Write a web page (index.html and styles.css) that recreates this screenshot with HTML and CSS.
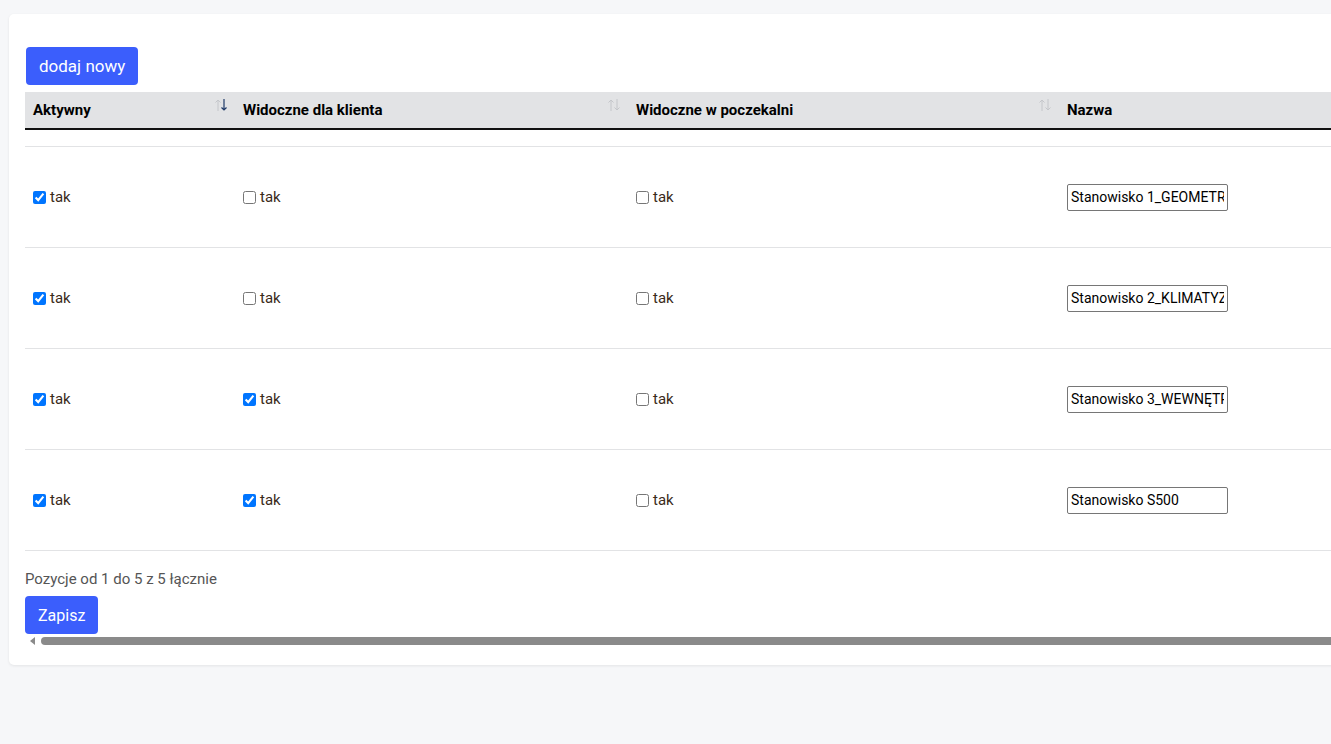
FILE: index.html
```html
<!DOCTYPE html>
<html lang="pl">
<head>
    <meta charset="UTF-8">
    <meta name="viewport" content="width=device-width, initial-scale=1.0">
    <link rel="stylesheet" href="styles.css">
    <title>Stanowiska</title>
</head>
<body>
    <div class="card">
        <button class="btn btn-add">dodaj nowy</button>
        <table class="grid">
            <thead>
                <tr>
                    <th class="col-active">Aktywny
                        <svg class="sort" width="14" height="14" viewBox="0 0 14 14">
                            <path d="M4 13V2M1.5 4.5L4 2l2.5 2.5" stroke="#c4c6ca" fill="none" stroke-width="1"/>
                            <path d="M10 1v11M7.5 9.5L10 12l2.5-2.5" stroke="#1f3a68" fill="none" stroke-width="1.2"/>
                        </svg>
                    </th>
                    <th class="col-client">Widoczne dla klienta
                        <svg class="sort" width="14" height="14" viewBox="0 0 14 14">
                            <path d="M4 13V2M1.5 4.5L4 2l2.5 2.5" stroke="#c4c6ca" fill="none" stroke-width="1"/>
                            <path d="M10 1v11M7.5 9.5L10 12l2.5-2.5" stroke="#c4c6ca" fill="none" stroke-width="1"/>
                        </svg>
                    </th>
                    <th class="col-lobby">Widoczne w poczekalni
                        <svg class="sort" width="14" height="14" viewBox="0 0 14 14">
                            <path d="M4 13V2M1.5 4.5L4 2l2.5 2.5" stroke="#c4c6ca" fill="none" stroke-width="1"/>
                            <path d="M10 1v11M7.5 9.5L10 12l2.5-2.5" stroke="#c4c6ca" fill="none" stroke-width="1"/>
                        </svg>
                    </th>
                    <th class="col-name">Nazwa</th>
                </tr>
            </thead>
            <tbody>
                <tr class="spacer"><td></td><td></td><td></td><td></td></tr>
                <tr>
                    <td><label><input type="checkbox" checked> tak</label></td>
                    <td><label><input type="checkbox"> tak</label></td>
                    <td><label><input type="checkbox"> tak</label></td>
                    <td><input class="name" type="text" value="Stanowisko 1_GEOMETRIA"></td>
                </tr>
                <tr>
                    <td><label><input type="checkbox" checked> tak</label></td>
                    <td><label><input type="checkbox"> tak</label></td>
                    <td><label><input type="checkbox"> tak</label></td>
                    <td><input class="name" type="text" value="Stanowisko 2_KLIMATYZACJA"></td>
                </tr>
                <tr>
                    <td><label><input type="checkbox" checked> tak</label></td>
                    <td><label><input type="checkbox" checked> tak</label></td>
                    <td><label><input type="checkbox"> tak</label></td>
                    <td><input class="name" type="text" value="Stanowisko 3_WEWNĘTRZNE"></td>
                </tr>
                <tr>
                    <td><label><input type="checkbox" checked> tak</label></td>
                    <td><label><input type="checkbox" checked> tak</label></td>
                    <td><label><input type="checkbox"> tak</label></td>
                    <td><input class="name" type="text" value="Stanowisko S500"></td>
                </tr>
            </tbody>
        </table>
        <div class="info">Pozycje od 1 do 5 z 5 łącznie</div>
        <button class="btn">Zapisz</button>
        <div class="hscroll">
            <span class="arrow"></span>
            <span class="thumb"></span>
        </div>
    </div>
</body>
</html>
```

FILE: styles.css
```css
body {
    margin: 0;
    padding: 14px 0 0 9px;
    background-color: #f6f7f9;
    font-family: Roboto, "Liberation Sans", Arial, sans-serif;
    font-size: 15px;
    color: #222;
    overflow: hidden;
    height: 100vh;
    box-sizing: border-box;
}

.card {
    width: 1600px;
    background-color: white;
    border-radius: 5px;
    box-shadow: 0 1px 3px rgba(0, 0, 0, 0.08);
    padding: 33px 16px 18px 16px;
    box-sizing: border-box;
}

.btn {
    display: block;
    background-color: #3b5efc;
    color: white;
    border: none;
    border-radius: 4px;
    font-family: inherit;
    font-size: 16px;
    height: 38px;
    padding: 0 13px;
    cursor: pointer;
}

.btn-add {
    font-size: 17px;
    margin-left: 1px;
}

.grid {
    margin-top: 7px;
    border-collapse: collapse;
    table-layout: fixed;
    width: 1550px;
}

.grid th {
    background-color: #e2e3e5;
    height: 36px;
    text-align: left;
    font-weight: bold;
    font-size: 15px;
    color: #000;
    padding: 0 8px;
    border-bottom: 2px solid #111;
    position: relative;
}

.grid .sort {
    position: absolute;
    right: 7px;
    top: 6px;
}

/* widths are content widths, padding adds 16px */
.col-active { width: 194px; }
.col-client { width: 377px; }
.col-lobby { width: 415px; }
.col-name { width: 500px; }

.grid td {
    height: 100px;
    padding: 0 8px;
    border-bottom: 1px solid #e2e3e5;
    color: #3a2a1a;
}

.grid .spacer td {
    height: 16px;
}

.grid label {
    display: flex;
    align-items: center;
}

.grid input[type="checkbox"] {
    margin: 0 4px 0 0;
    width: 13px;
    height: 13px;
}

.name {
    width: 161px;
    height: 27px;
    box-sizing: border-box;
    border: 1px solid #767676;
    border-radius: 2px;
    padding: 0 3px;
    font-family: inherit;
    font-size: 14px;
    color: #000;
}

.info {
    color: #555;
    margin: 20px 0 8px 0;
    line-height: 17px;
}

.hscroll {
    display: flex;
    align-items: center;
    height: 12px;
    margin-top: 1px;
    gap: 6px;
}

.hscroll .arrow {
    width: 0;
    height: 0;
    border-top: 4px solid transparent;
    border-bottom: 4px solid transparent;
    border-right: 5px solid #8a8a8a;
    margin-left: 5px;
}

.hscroll .thumb {
    flex: 1;
    height: 8px;
    border-radius: 4px;
    background-color: #8a8a8a;
}
```
